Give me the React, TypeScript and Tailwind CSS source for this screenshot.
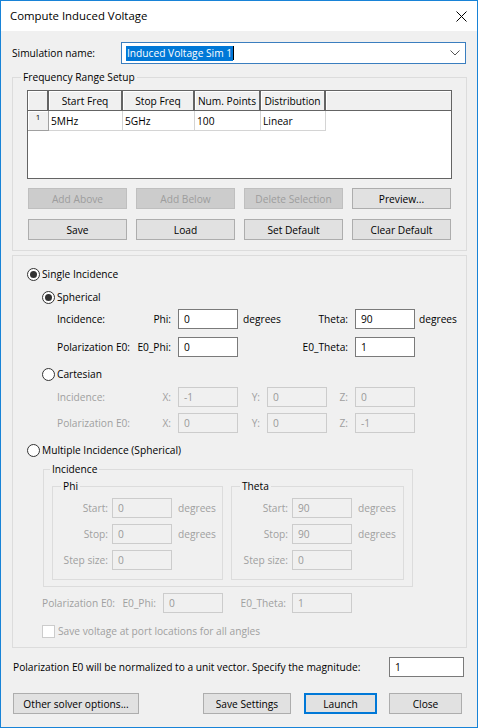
import type { ReactNode } from 'react';
import clsx from 'clsx';

function Radio({ checked }: { checked?: boolean }) {
  return (
    <span className="w-[13px] h-[13px] rounded-full border border-[#333333] bg-white flex items-center justify-center shrink-0">
      {checked && <span className="w-[7px] h-[7px] rounded-full bg-[#333333]" />}
    </span>
  );
}

function Field({ value, w = 'w-[60px]', disabled }: { value: string; w?: string; disabled?: boolean }) {
  return (
    <div
      className={clsx(
        'h-[20px] shrink-0 flex items-center pl-[5px] border',
        w,
        disabled ? 'bg-[#f0f0f0] border-[#cccccc] text-[#9a9a9a]' : 'bg-white border-[#7a7a7a] text-black'
      )}
    >
      {value}
    </div>
  );
}

function Btn({
  children,
  w,
  disabled,
  primary,
  className,
}: {
  children: ReactNode;
  w: string;
  disabled?: boolean;
  primary?: boolean;
  className?: string;
}) {
  return (
    <button
      type="button"
      className={clsx(
        'h-[21px] shrink-0 flex items-center justify-center',
        w,
        disabled
          ? 'bg-[#cccccc] border border-[#bfbfbf] text-[#9d9d9d]'
          : primary
            ? 'bg-[#e1e1e1] border-2 border-[#0078d7] text-black'
            : 'bg-[#e1e1e1] border border-[#adadad] text-black',
        className
      )}
    >
      {children}
    </button>
  );
}

function Group({
  title,
  className,
  legendClass = 'ml-[8px]',
  children,
}: {
  title: string;
  className?: string;
  legendClass?: string;
  children: ReactNode;
}) {
  return (
    <fieldset className={clsx('border border-[#dcdcdc] min-w-0', className)}>
      <legend className={clsx('px-[2px] leading-[16px]', legendClass)}>{title}</legend>
      {children}
    </fieldset>
  );
}

const COLS = [
  { head: 'Start Freq', val: '5MHz', w: 'w-[74px]' },
  { head: 'Stop Freq', val: '5GHz', w: 'w-[72px]' },
  { head: 'Num. Points', val: '100', w: 'w-[66px]' },
  { head: 'Distribution', val: 'Linear', w: 'w-[65px]' },
];

function FreqTable() {
  return (
    <div className="mt-[5px] mx-[14px] h-[89px] border border-[#646464] bg-white flex flex-col">
      <div className="flex h-[20px]">
        <div className="w-[21px] bg-[#f0f0f0] border-r-2 border-b border-[#646464] shadow-[inset_1px_1px_0_#ffffff]" />
        {COLS.map((c) => (
          <div
            key={c.head}
            className={clsx(
              c.w,
              'bg-[#f0f0f0] border-r-2 border-b border-[#646464] shadow-[inset_1px_1px_0_#ffffff] flex items-center justify-center'
            )}
          >
            {c.head}
          </div>
        ))}
        <div className="flex-1 bg-[#f0f0f0] border-b border-[#646464] shadow-[inset_1px_1px_0_#ffffff]" />
      </div>
      <div className="flex h-[20px]">
        <div className="w-[21px] bg-[#f0f0f0] border-r border-b border-[#a0a0a0] shadow-[inset_1px_1px_0_#ffffff] flex justify-center pt-[1px] text-[8px] leading-[10px]">
          1
        </div>
        {COLS.map((c) => (
          <div key={c.head} className={clsx(c.w, 'border-r border-b border-[#d4d4d4] flex items-center pl-[2px]')}>
            {c.val}
          </div>
        ))}
      </div>
    </div>
  );
}

function RangeRow({ label, value, degrees, lw }: { label: string; value: string; degrees?: boolean; lw: string }) {
  return (
    <div className="flex items-center h-[20px]">
      <span className={clsx(lw, 'text-right text-[#a0a0a0]')}>{label}</span>
      <span className="ml-[4px]">
        <Field value={value} disabled />
      </span>
      {degrees && <span className="ml-[6px] text-[#a0a0a0]">degrees</span>}
    </div>
  );
}

export default function App() {
  return (
    <div className="w-[478px] h-[728px] border border-[#1883d7] bg-[#f0f0f0] flex flex-col font-['Open_Sans','Noto_Sans',sans-serif] text-[10.2px] leading-[16px] text-black overflow-hidden">
      {/* title bar */}
      <div className="h-[30px] bg-white flex items-center justify-between pl-[9px] pr-[9px] shrink-0">
        <span className="text-[11.4px]">Compute Induced Voltage</span>
        <svg width="11" height="11" viewBox="0 0 11 11" className="mr-[1px]">
          <path d="M0.5 0.5 L10.5 10.5 M10.5 0.5 L0.5 10.5" stroke="#000" strokeWidth="1" />
        </svg>
      </div>

      <div className="flex flex-col pl-[11px] pr-[10px]">
        {/* simulation name */}
        <div className="mt-[11px] flex items-center h-[22px]">
          <span className="w-[109px]">Simulation name:</span>
          <div className="w-[345px] h-[22px] bg-white border border-[#3a7ebf] flex items-center pl-[4px] pr-[5px]">
            <span className="bg-[#0078d7] text-white leading-[15px] px-[1px]">Induced Voltage Sim 1</span>
            <span className="w-px h-[14px] bg-black" />
            <svg width="10" height="6" viewBox="0 0 10 6" className="ml-auto">
              <path d="M0.5 0.5 L5 5 L9.5 0.5" fill="none" stroke="#555" strokeWidth="1" />
            </svg>
          </div>
        </div>

        {/* frequency range setup */}
        <Group title="Frequency Range Setup" className="mt-[5px] pb-[10px]">
          <FreqTable />
          <div className="mt-[9px] ml-[15px] flex gap-[9px]">
            <Btn w="w-[99px]" disabled>
              Add Above
            </Btn>
            <Btn w="w-[99px]" disabled>
              Add Below
            </Btn>
            <Btn w="w-[99px]" disabled>
              Delete Selection
            </Btn>
            <Btn w="w-[99px]">Preview...</Btn>
          </div>
          <div className="mt-[10px] ml-[15px] flex gap-[9px]">
            <Btn w="w-[99px]">Save</Btn>
            <Btn w="w-[99px]">Load</Btn>
            <Btn w="w-[99px]">Set Default</Btn>
            <Btn w="w-[99px]">Clear Default</Btn>
          </div>
        </Group>

        {/* incidence panel */}
        <div className="mt-[4px] border border-[#dcdcdc] flex flex-col pb-[8px]">
          <div className="mt-[10px] pl-[14px] h-[16px] flex items-center gap-[2px]">
            <Radio checked />
            <span>Single Incidence</span>
          </div>
          <div className="mt-[7px] pl-[29px] h-[16px] flex items-center gap-[2px]">
            <Radio checked />
            <span>Spherical</span>
          </div>
          <div className="mt-[4px] pl-[44px] flex items-center">
            <div className="w-[114px] flex justify-between">
              <span>Incidence:</span>
              <span>Phi:</span>
            </div>
            <span className="ml-[7px]">
              <Field value="0" />
            </span>
            <div className="w-[110px] flex justify-between pl-[5px]">
              <span>degrees</span>
              <span>Theta:</span>
            </div>
            <span className="ml-[7px]">
              <Field value="90" />
            </span>
            <span className="ml-[4px]">degrees</span>
          </div>
          <div className="mt-[8px] pl-[44px] flex items-center">
            <div className="w-[114px] flex justify-between">
              <span>Polarization E0:</span>
              <span>E0_Phi:</span>
            </div>
            <span className="ml-[7px]">
              <Field value="0" />
            </span>
            <span className="w-[110px] text-right">E0_Theta:</span>
            <span className="ml-[7px]">
              <Field value="1" />
            </span>
          </div>
          <div className="mt-[9px] pl-[29px] h-[16px] flex items-center gap-[2px]">
            <Radio />
            <span>Cartesian</span>
          </div>
          <div className="mt-[5px] pl-[44px] flex items-center text-[#a0a0a0]">
            <div className="w-[114px] flex justify-between">
              <span>Incidence:</span>
              <span>X:</span>
            </div>
            <span className="ml-[7px]">
              <Field value="-1" disabled />
            </span>
            <span className="w-[22px] text-right">Y:</span>
            <span className="ml-[7px]">
              <Field value="0" disabled />
            </span>
            <span className="w-[21px] text-right">Z:</span>
            <span className="ml-[7px]">
              <Field value="0" disabled />
            </span>
          </div>
          <div className="mt-[6px] pl-[44px] flex items-center text-[#a0a0a0]">
            <div className="w-[114px] flex justify-between">
              <span>Polarization E0:</span>
              <span>X:</span>
            </div>
            <span className="ml-[7px]">
              <Field value="0" disabled />
            </span>
            <span className="w-[22px] text-right">Y:</span>
            <span className="ml-[7px]">
              <Field value="0" disabled />
            </span>
            <span className="w-[21px] text-right">Z:</span>
            <span className="ml-[7px]">
              <Field value="-1" disabled />
            </span>
          </div>
          <div className="mt-[9px] pl-[14px] h-[16px] flex items-center gap-[2px]">
            <Radio />
            <span>Multiple Incidence (Spherical)</span>
          </div>

          <Group title="Incidence" legendClass="ml-[6px]" className="mt-[3px] ml-[30px] w-[370px] pb-[6px]">
            <div className="mt-[1px] flex">
              <Group title="Phi" className="ml-[8px] w-[171px] pb-[9px]">
                <div className="mt-[4px] flex flex-col gap-[6px]">
                  <RangeRow lw="w-[55px]" label="Start:" value="0" degrees />
                  <RangeRow lw="w-[55px]" label="Stop:" value="0" degrees />
                  <RangeRow lw="w-[55px]" label="Step size:" value="0" />
                </div>
              </Group>
              <Group title="Theta" className="ml-[8px] w-[173px] pb-[9px]">
                <div className="mt-[4px] flex flex-col gap-[6px]">
                  <RangeRow lw="w-[56px]" label="Start:" value="90" degrees />
                  <RangeRow lw="w-[56px]" label="Stop:" value="90" degrees />
                  <RangeRow lw="w-[56px]" label="Step size:" value="0" />
                </div>
              </Group>
            </div>
          </Group>

          <div className="mt-[6px] pl-[29px] flex items-center text-[#a0a0a0]">
            <div className="w-[114px] flex justify-between">
              <span>Polarization E0:</span>
              <span>E0_Phi:</span>
            </div>
            <span className="ml-[7px]">
              <Field value="0" disabled />
            </span>
            <span className="w-[63px] text-right">E0_Theta:</span>
            <span className="ml-[6px]">
              <Field value="1" disabled />
            </span>
          </div>
          <div className="mt-[10px] pl-[29px] h-[16px] flex items-center text-[#a0a0a0]">
            <span className="w-[13px] h-[13px] border border-[#cccccc] bg-white shrink-0" />
            <span className="ml-[3px]">Save voltage at port locations for all angles</span>
          </div>
        </div>

        {/* magnitude */}
        <div className="mt-[9px] flex items-center h-[20px]">
          <span className="ml-[1px]">Polarization E0 will be normalized to a unit vector. Specify the magnitude:</span>
          <span className="ml-auto mr-[3px]">
            <Field value="1" w="w-[75px]" />
          </span>
        </div>

        {/* bottom buttons */}
        <div className="mt-[16px] flex">
          <Btn w="w-[126px]" className="ml-[1px]">
            Other solver options...
          </Btn>
          <Btn w="w-[88px]" className="ml-[64px]">
            Save Settings
          </Btn>
          <Btn w="w-[73px]" primary className="ml-[13px]">
            Launch
          </Btn>
          <Btn w="w-[73px]" className="ml-[12px]">
            Close
          </Btn>
        </div>
      </div>
    </div>
  );
}
